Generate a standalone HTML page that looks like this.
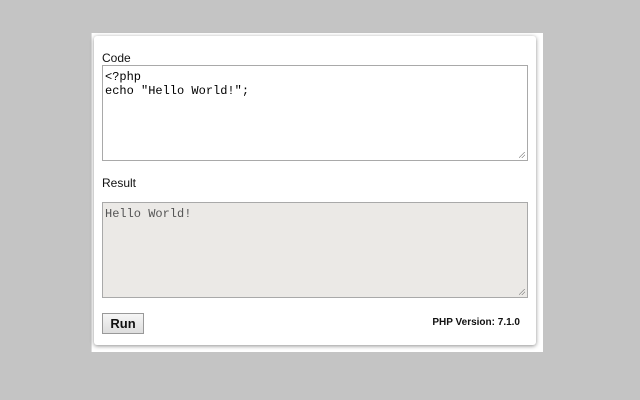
<!DOCTYPE html>
<html><head><style>
body{margin:0;width:640px;height:400px;background:#c4c4c4;position:relative;overflow:hidden;font-family:"Liberation Sans",Arial,sans-serif}
.back{position:absolute;left:91px;top:33px;width:451px;height:319px;background:#fff;border-left:1px solid #ddd}
.pop{position:absolute;left:94px;top:36px;width:442px;height:309px;background:#fff;border-radius:3px;box-shadow:0 1px 4px rgba(0,0,0,.45)}
.lbl{position:absolute;left:102px;font-size:12px;color:#111}
.ta{position:absolute;left:102px;width:426px;height:94px;border:1px solid #a9a9a9;font-family:"Liberation Mono",monospace;font-size:12px;line-height:14px;padding:4px 2px;box-sizing:border-box;color:#000;white-space:pre}
.rs{position:absolute;right:2px;bottom:2px;width:6px;height:6px;background:linear-gradient(135deg,transparent 45%,#888 46%,#888 52%,transparent 53%,transparent 70%,#888 71%,#888 77%,transparent 78%)}
.btn{position:absolute;left:102px;top:313px;width:42px;height:21px;border:1px solid #999;background:linear-gradient(#f6f6f6,#ddd);font-weight:bold;font-size:13px;text-align:center;line-height:20px;box-sizing:border-box;color:#111}
.ver{position:absolute;right:120px;top:317px;font-size:10px;font-weight:bold;color:#111}
</style></head><body>
<div class="back"></div>
<div class="pop"></div>
<div class="lbl" style="top:51px">Code</div>
<div class="ta" style="top:65px;height:96px;background:#fff">&lt;?php
echo "Hello World!";<div class="rs"></div></div>
<div class="lbl" style="top:176px">Result</div>
<div class="ta" style="top:202px;height:96px;background:#ebe9e6;color:#555">Hello World!<div class="rs"></div></div>
<div class="btn">Run</div>
<div class="ver">PHP Version: 7.1.0</div>
</body></html>
